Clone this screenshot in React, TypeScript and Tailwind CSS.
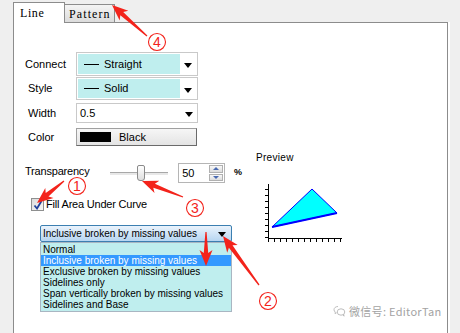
import type { ReactNode } from 'react';

const RED = '#f3231b';

// tapered red annotation arrow, tail -> tip
function arrowPoints(x1: number, y1: number, x2: number, y2: number) {
  const dx = x2 - x1;
  const dy = y2 - y1;
  const len = Math.hypot(dx, dy);
  const ux = dx / len;
  const uy = dy / len;
  const px = -uy;
  const py = ux;
  const hl = 13;
  const hw = 6.5;
  const sw = 2.2;
  const tw = 0.6;
  const bx = x2 - ux * hl;
  const by = y2 - uy * hl;
  const wx = x2 - ux * (hl + 3);
  const wy = y2 - uy * (hl + 3);
  const pts = [
    [x1 + px * tw, y1 + py * tw],
    [bx + px * sw, by + py * sw],
    [wx + px * hw, wy + py * hw],
    [x2, y2],
    [wx - px * hw, wy - py * hw],
    [bx - px * sw, by - py * sw],
    [x1 - px * tw, y1 - py * tw],
  ];
  return pts.map((p) => `${p[0].toFixed(1)},${p[1].toFixed(1)}`).join(' ');
}

const arrows = [
  [147, 36, 112, 5],
  [64, 181, 37, 203],
  [183, 197, 142, 181],
  [259, 285, 223, 236],
  [206, 232, 206, 266],
];

const circles = [
  { x: 157, y: 42, n: '4' },
  { x: 77, y: 186, n: '1' },
  { x: 195, y: 208, n: '3' },
  { x: 268, y: 301, n: '2' },
];

const options = [
  'Normal',
  'Inclusive broken by missing values',
  'Exclusive broken by missing values',
  'Sidelines only',
  'Span vertically broken by missing values',
  'Sidelines and Base',
];

function DownArrow() {
  return (
    <svg width="8" height="5" viewBox="0 0 8 5" className="shrink-0">
      <path d="M0 0h8L4 5z" fill="#000" />
    </svg>
  );
}

function LineCombo({ label }: { label: string }) {
  return (
    <div className="flex items-center w-[122px] h-full border border-[#c9c9c9] bg-white p-px">
      <div className="flex items-center h-full w-[102px] bg-[#bfeeee] pl-[6px] gap-[5px]">
        <span className="w-[15px] h-px bg-black" />
        <span>{label}</span>
      </div>
      <div className="flex-1 flex justify-center pt-[3px]">
        <DownArrow />
      </div>
    </div>
  );
}

function Row({ label, indent, children, h, mt }: { label: string; indent?: boolean; children: ReactNode; h: string; mt: string }) {
  return (
    <div className={`flex items-center ${h} ${mt}`}>
      <span className={`w-[51px] ${indent ? 'pl-[3px]' : ''}`}>{label}</span>
      {children}
    </div>
  );
}

function Chart() {
  const yt = [9, 15, 21, 27, 33, 39, 45, 51, 57];
  const xt = [7, 13, 19, 25, 31, 37, 43, 49, 55, 61, 67, 73, 79];
  return (
    <svg width="86" height="64" viewBox="0 0 86 64" className="ml-[5px] mt-[17px]">
      <line x1="7.5" y1="3" x2="7.5" y2="58" stroke="#000" />
      <line x1="7" y1="57.5" x2="81" y2="57.5" stroke="#000" />
      {yt.map((y) => (
        <line key={y} x1="4" y1={y - 0.5} x2="7" y2={y - 0.5} stroke="#000" />
      ))}
      {xt.map((x) => (
        <line key={x} x1={x + 0.5} y1="58" x2={x + 0.5} y2="61" stroke="#000" />
      ))}
      <polygon points="11,46 51,8 76,32" fill="#00ffff" stroke="#0000ff" strokeWidth="1" />
      <line x1="11" y1="46" x2="76" y2="32" stroke="#0000ff" strokeWidth="2" />
    </svg>
  );
}

export default function App() {
  return (
    <div className="w-[460px] h-[333px] bg-[#efefef] relative overflow-hidden text-[11px] text-black [font-family:'Liberation_Sans',Arial,sans-serif]">
      {/* tabs */}
      <div className="flex items-end pl-[13px] pt-[2px] h-[22px]">
        <div className="relative z-10 w-[52px] h-[21px] -mb-px border border-b-0 border-[#8c8c8c] bg-white pl-[6px] pt-[4px] text-[12px] tracking-[0.6px] leading-none [font-family:'Liberation_Serif',serif]">
          Line
        </div>
        <div className="w-[50px] h-[18px] border border-l-0 border-b-0 border-[#8c8c8c] bg-gradient-to-b from-[#f4f4f4] to-[#dcdcdc] pl-[4px] pt-[3px] text-[12px] tracking-[1.1px] leading-none [font-family:'Liberation_Serif',serif]">
          Pattern
        </div>
      </div>

      {/* page */}
      <div className="ml-[13px] w-[435px] h-[320px] border border-[#8c8c8c] bg-white shadow-[2px_0_0_#ffffff] pt-[29px]">
        <div className="pl-[11px]">
          <Row label="Connect" h="h-[24px]" mt="mt-0">
            <LineCombo label="Straight" />
          </Row>
          <Row label="Style" indent h="h-[23px]" mt="mt-px">
            <LineCombo label="Solid" />
          </Row>
          <Row label="Width" indent h="h-[20px]" mt="mt-[3px]">
            <div className="flex items-center justify-between w-[122px] h-full border border-[#c9c9c9] bg-white pl-[3px] pr-[4px]">
              <span>0.5</span>
              <span className="pt-[3px]"><DownArrow /></span>
            </div>
          </Row>
          <Row label="Color" indent h="h-[18px]" mt="mt-[5px]">
            <div className="flex items-center w-[121px] h-full border border-[#a0a0a0] border-r-[#6a6a6a] border-b-[#6a6a6a] bg-gradient-to-b from-[#f6f6f6] to-[#e4e4e4] pl-[3px] gap-[8px]">
              <span className="w-[31px] h-[10px] bg-black" />
              <span>Black</span>
            </div>
          </Row>
        </div>

        <div className="flex">
          {/* left column */}
          <div className="w-[228px]">
            <div className="flex items-center h-[20px] mt-[17px] pl-[11px]">
              <span className="w-[85px] -mt-[3px] tracking-[-0.2px]">Transparency</span>
              <div className="relative w-[59px] h-[16px] flex items-center">
                <div className="w-full h-[3px] border-t border-[#a8a8a8] bg-[#e8e8e8]" />
                <div className="absolute left-[27px] top-0 w-[8px] h-[16px] rounded-b-[3px] rounded-t-[2px] border border-[#8a8a8a] bg-gradient-to-b from-[#ffffff] to-[#dedede]" />
              </div>
              <div className="ml-[10px] flex items-center w-[47px] h-[20px] border border-[#b5b5b5] bg-white pl-[3px]">
                <span className="flex-1">50</span>
                <div className="flex flex-col w-[15px] h-full py-px pr-px gap-px">
                  <div className="flex-1 flex items-center justify-center border border-[#b0b0b0] bg-gradient-to-b from-[#f8f8f8] to-[#dcdcdc]">
                    <svg width="6" height="3" viewBox="0 0 6 3"><path d="M0 3h6L3 0z" fill="#4a6ab0" /></svg>
                  </div>
                  <div className="flex-1 flex items-center justify-center border border-[#b0b0b0] bg-gradient-to-b from-[#f8f8f8] to-[#dcdcdc]">
                    <svg width="6" height="3" viewBox="0 0 6 3"><path d="M0 0h6L3 3z" fill="#4a6ab0" /></svg>
                  </div>
                </div>
              </div>
              <span className="ml-[9px] text-[9px] font-bold">%</span>
            </div>

            <div className="flex items-center h-[13px] mt-[15px] pl-[17px] gap-[2px]">
              <div className="w-[13px] h-[13px] border border-[#8e8f8f] bg-gradient-to-br from-[#dcdcdc] to-[#f6f6f6] flex items-center justify-center">
                <svg width="10" height="10" viewBox="0 0 10 10">
                  <path d="M1.5 5.5 L4 8.5 L8.5 1" fill="none" stroke="#21409a" strokeWidth="1.8" />
                </svg>
              </div>
              <span className="tracking-[-0.2px]">Fill Area Under Curve</span>
            </div>

            <div className="ml-[26px] mt-[14px] w-[192px] text-[10px]">
              <div className="flex items-center justify-between h-[17px] border border-[#3c7fb1] rounded-[2px] bg-gradient-to-b from-[#eaf3fc] to-[#b7d6f1] pl-[2px] pr-[5px]">
                <span>Inclusive broken by missing values</span>
                <span className="pt-[2px]"><DownArrow /></span>
              </div>
              <div className="border border-[#a9b6c2] bg-[#bfeeee] py-px">
                {options.map((o, i) => (
                  <div
                    key={o}
                    className={`h-[11px] leading-[11px] pl-[2px] ${i === 1 ? 'bg-[#3399ff] text-white' : ''}`}
                  >
                    {o}
                  </div>
                ))}
              </div>
            </div>
          </div>

          {/* preview */}
          <div className="ml-[14px] pt-[6px]">
            <div className="text-[10px] leading-[12px] tracking-[0.3px]">Preview</div>
            <Chart />
          </div>
        </div>
      </div>

      {/* watermark */}
      <div className="absolute left-[333px] top-[303px] flex items-center gap-[3px] text-[11px] text-[#a3a3a3] [font-family:'Noto_Sans_CJK_SC',sans-serif]">
        <svg width="13" height="12" viewBox="0 0 13 12" fill="none" stroke="#b5b5b5" strokeWidth="0.9">
          <path d="M5 1.5c-2.3 0-4 1.4-4 3.2 0 1 .5 1.8 1.3 2.4L2 8.6l1.6-.8" />
          <ellipse cx="8" cy="7" rx="3.8" ry="3.2" />
          <path d="M10 10l1 1.2-.2-1.6" />
        </svg>
        <span className="tracking-[0.3px]">微信号: EditorTan</span>
      </div>

      {/* annotations */}
      <svg className="absolute inset-0 pointer-events-none" width="460" height="333" viewBox="0 0 460 333">
        {arrows.map((a, i) => (
          <polygon key={i} points={arrowPoints(a[0], a[1], a[2], a[3])} fill={RED} />
        ))}
        {circles.map((c) => (
          <g key={c.n}>
            <circle cx={c.x} cy={c.y} r="8.5" fill="none" stroke={RED} strokeWidth="1.1" />
            <text
              x={c.x}
              y={c.y + 5}
              textAnchor="middle"
              fontSize="14"
              fill={RED}
              fontFamily='"Liberation Sans", Arial, sans-serif'
            >
              {c.n}
            </text>
          </g>
        ))}
      </svg>
    </div>
  );
}
